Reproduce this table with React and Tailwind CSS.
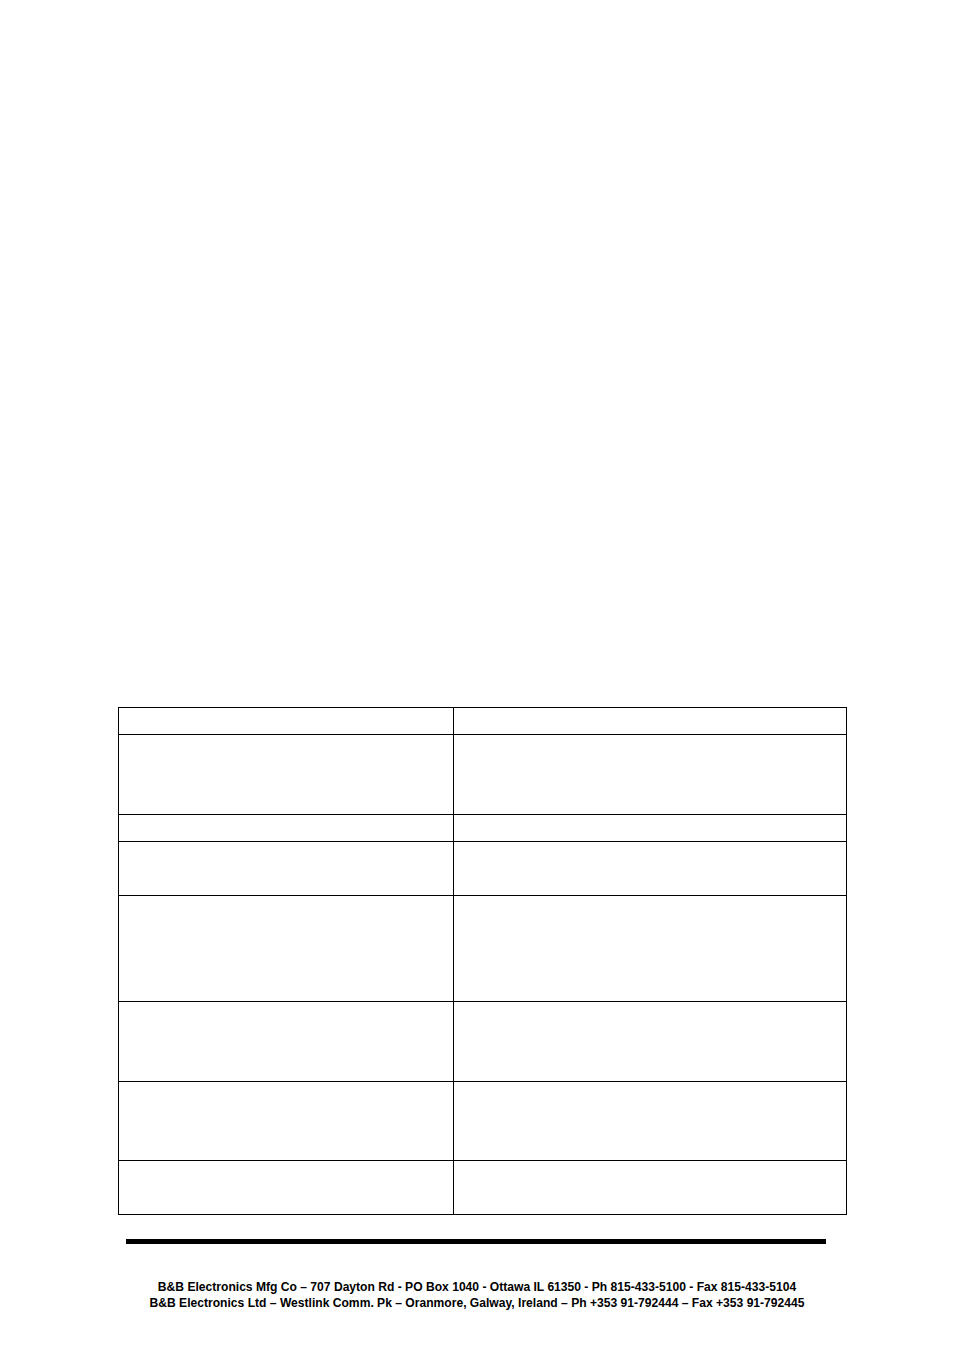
import React from "react";

const rowHeights = ["h-[27px]", "h-[80px]", "h-[27px]", "h-[54px]", "h-[106px]", "h-[80px]", "h-[79px]", "h-[54px]"];

export default function App() {
  return (
    <div className="w-[954px] h-[1352px] bg-white relative font-['Liberation_Sans',Arial,sans-serif]">
      <div className="pt-[707px]">
        {/* spec table (empty cells) */}
        <div className="ml-[118px] w-[729px] border-l border-t border-black">
          {rowHeights.map((h, i) => (
            <div key={i} className={"grid grid-cols-[335px_393px] " + h}>
              <div className="border-r border-b border-black" />
              <div className="border-r border-b border-black" />
            </div>
          ))}
        </div>

        <div className="ml-[126px] mt-[24px] w-[700px] h-[5px] bg-black" />

        {/* footer */}
        <div className="mt-[35px] text-center text-[12.1px] leading-[16px] font-bold text-black font-['Liberation_Sans_Narrow','Arial_Narrow',sans-serif]">
          <p>B&amp;B Electronics Mfg Co – 707 Dayton Rd - PO Box 1040 - Ottawa IL 61350 - Ph 815-433-5100 - Fax 815-433-5104</p>
          <p>B&amp;B Electronics Ltd – Westlink Comm. Pk – Oranmore, Galway, Ireland – Ph +353 91-792444 – Fax +353 91-792445</p>
        </div>
      </div>
    </div>
  );
}
